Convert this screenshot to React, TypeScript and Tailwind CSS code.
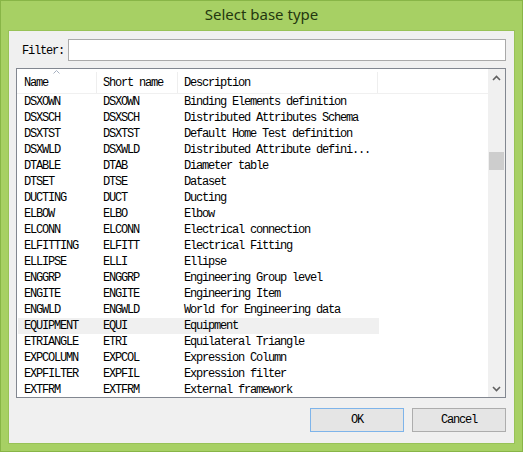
import React from 'react';

const rows: [string, string, string][] = [
  ['DSXOWN', 'DSXOWN', 'Binding Elements definition'],
  ['DSXSCH', 'DSXSCH', 'Distributed Attributes Schema'],
  ['DSXTST', 'DSXTST', 'Default Home Test definition'],
  ['DSXWLD', 'DSXWLD', 'Distributed Attribute defini...'],
  ['DTABLE', 'DTAB', 'Diameter table'],
  ['DTSET', 'DTSE', 'Dataset'],
  ['DUCTING', 'DUCT', 'Ducting'],
  ['ELBOW', 'ELBO', 'Elbow'],
  ['ELCONN', 'ELCONN', 'Electrical connection'],
  ['ELFITTING', 'ELFITT', 'Electrical Fitting'],
  ['ELLIPSE', 'ELLI', 'Ellipse'],
  ['ENGGRP', 'ENGGRP', 'Engineering Group level'],
  ['ENGITE', 'ENGITE', 'Engineering Item'],
  ['ENGWLD', 'ENGWLD', 'World for Engineering data'],
  ['EQUIPMENT', 'EQUI', 'Equipment'],
  ['ETRIANGLE', 'ETRI', 'Equilateral Triangle'],
  ['EXPCOLUMN', 'EXPCOL', 'Expression Column'],
  ['EXPFILTER', 'EXPFIL', 'Expression filter'],
  ['EXTFRM', 'EXTFRM', 'External framework'],
];

const mono = "font-['Liberation_Mono',monospace] text-[12px] tracking-[-1.2px] text-black";

export default function App() {
  return (
    <div className="w-[523px] h-[452px] bg-[#a7d064] border border-[#88b547] flex flex-col">
      {/* Title bar */}
      <div className="h-[29px] pb-[2px] flex items-center justify-center font-['Noto_Sans',sans-serif] text-[15px] text-[#24380f]">
        Select base type
      </div>

      {/* Client area */}
      <div className="mx-[7px] mb-[7px] flex-1 bg-[#f0f0f0] border border-[#98c257] flex flex-col pl-[7px] pr-[8px]">
        <div className="flex items-center h-[22px] mt-[8px]">
          <span className={`${mono} w-[52px] pl-[6px] pt-[1px]`}>Filter:</span>
          <div className="flex-1 h-[22px] bg-white border border-[#a9a9a9]" />
        </div>

        {/* List */}
        <div className="mt-[7px] h-[330px] bg-white border border-[#828790] flex overflow-hidden">
          <div className="flex-1 flex flex-col overflow-hidden">
            <div className="h-[25px] pt-[3px] flex shrink-0 border-b border-[#f0f0f0]">
              <div className={`${mono} relative w-[80px] pl-[7px] flex items-center border-r border-[#eeeeee]`}>
                Name
                <svg className="absolute left-[36px] top-[-2px]" width="7" height="4" viewBox="0 0 7 4">
                  <path d="M0.5 3.5 L3.5 0.5 L6.5 3.5" stroke="#a6b0c0" fill="none" />
                </svg>
              </div>
              <div className={`${mono} w-[81px] pl-[6px] flex items-center border-r border-[#eeeeee]`}>Short name</div>
              <div className={`${mono} w-[200px] pl-[6px] flex items-center border-r border-[#eeeeee]`}>Description</div>
            </div>
            <div className="flex flex-col">
              {rows.map(([n, s, d]) => (
                <div
                  key={n}
                  className={`h-[16px] flex items-center w-[361px] ml-[1px] ${n === 'EQUIPMENT' ? 'bg-[#f0f0f0]' : ''}`}
                >
                  <span className={`${mono} w-[79px] pl-[6px] whitespace-nowrap`}>{n}</span>
                  <span className={`${mono} w-[81px] pl-[6px] whitespace-nowrap`}>{s}</span>
                  <span className={`${mono} pl-[6px] whitespace-nowrap`}>{d}</span>
                </div>
              ))}
            </div>
          </div>

          {/* Scrollbar */}
          <div className="w-[17px] bg-[#f0f0f0] flex flex-col items-center">
            <div className="h-[17px] flex items-center justify-center">
              <svg width="9" height="6" viewBox="0 0 9 6">
                <path d="M1 5 L4.5 1.5 L8 5" stroke="#606060" strokeWidth="1.6" fill="none" />
              </svg>
            </div>
            <div className="h-[66px]" />
            <div className="w-[15px] h-[18px] bg-[#cdcdcd]" />
            <div className="flex-1" />
            <div className="h-[17px] flex items-center justify-center">
              <svg width="9" height="6" viewBox="0 0 9 6">
                <path d="M1 1 L4.5 4.5 L8 1" stroke="#606060" strokeWidth="1.6" fill="none" />
              </svg>
            </div>
          </div>
        </div>

        {/* Buttons */}
        <div className="flex justify-end gap-[8px] mt-[10px]">
          <button className={`${mono} w-[94px] h-[24px] bg-[#e5e5e5] border border-[#7eb4ea]`}>OK</button>
          <button className={`${mono} w-[94px] h-[24px] bg-[#e5e5e5] border border-[#adadad]`}>Cancel</button>
        </div>
      </div>
    </div>
  );
}
